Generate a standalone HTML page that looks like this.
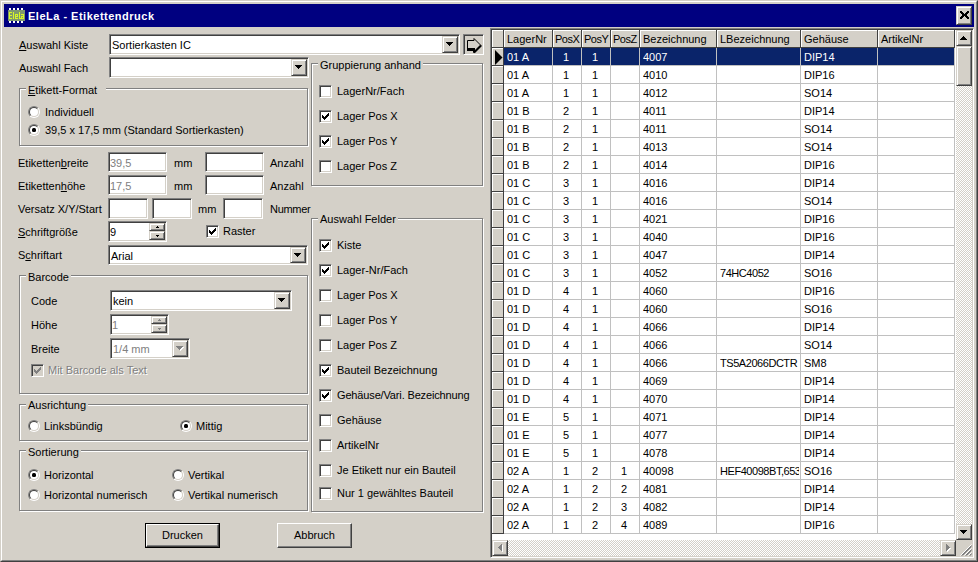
<!DOCTYPE html><html><head><meta charset="utf-8"><style>
*{margin:0;padding:0}
html,body{width:978px;height:562px;overflow:hidden;background:#d4d0c8}
body{position:relative;font-family:"Liberation Sans",sans-serif;font-size:11px}
.t{position:absolute;font-family:"Liberation Sans",sans-serif;font-size:11px;line-height:13px;white-space:nowrap;color:#000}
.gr{color:#808080}
.dis{color:#808080;text-shadow:1px 1px 0 #fff}
.sk{position:absolute;box-sizing:border-box;border:1px solid;border-color:#808080 #fff #fff #808080;box-shadow:inset 1px 1px #404040,inset -1px -1px #d4d0c8}
.rz{position:absolute;box-sizing:border-box;background:#d4d0c8;border:1px solid;border-color:#d4d0c8 #404040 #404040 #d4d0c8;box-shadow:inset 1px 1px #fff,inset -1px -1px #808080}
.ab{position:absolute;display:block}
.gb{position:absolute;box-sizing:border-box;border:1px solid #808080;box-shadow:1px 1px 0 #fff,inset 1px 1px 0 #fff}
.gt{background:#d4d0c8;padding:0 2px}
.rd{position:absolute;width:12px;height:12px;box-sizing:border-box;border-radius:50%;border:1px solid;border-color:#808080 #fff #fff #808080;transform:rotate(0deg)}
.rdi{position:absolute;left:0;top:0;width:10px;height:10px;box-sizing:border-box;border-radius:50%;border:1px solid;border-color:#404040 #d4d0c8 #d4d0c8 #404040;background:#fff}
.btn{position:absolute;box-sizing:border-box;background:#d4d0c8;border:1px solid;border-color:#fff #404040 #404040 #fff;}
.btn .bi{position:absolute;left:0;top:0;right:0;bottom:0;border-right:1px solid #808080;border-bottom:1px solid #808080}
.btn.def{border:1px solid #000}
.btn.def .bi{border:1px solid;border-color:#fff #404040 #404040 #fff;box-shadow:inset -1px -1px #808080}
.btn span{position:absolute;left:0;right:0;top:5px;text-align:center;line-height:13px;font-size:11px}
.gc{position:absolute;font-size:11px;line-height:13px;white-space:nowrap;overflow:hidden}
</style></head><body><div style="position:absolute;left:0;top:0;width:978px;height:562px;box-sizing:border-box;border:1px solid;border-color:#d4d0c8 #404040 #404040 #d4d0c8"></div>
<div style="position:absolute;left:1px;top:1px;width:976px;height:560px;box-sizing:border-box;border:1px solid;border-color:#fff #808080 #808080 #fff"></div>
<div style="position:absolute;left:4px;top:4px;width:970px;height:23px;background:#000080"></div>
<svg style="position:absolute;left:8px;top:8px" width="17" height="15">
<g fill="#fff"><rect x="1" y="0" width="2" height="2"/><rect x="5" y="0" width="2" height="2"/><rect x="9" y="0" width="2" height="2"/><rect x="13" y="0" width="2" height="2"/>
<rect x="1" y="13" width="2" height="2"/><rect x="5" y="13" width="2" height="2"/><rect x="9" y="13" width="2" height="2"/><rect x="13" y="13" width="2" height="2"/></g>
<rect x="0" y="2" width="17" height="11" fill="#7f9a6e"/>
<g fill="#d8f82a"><rect x="1" y="4" width="1" height="7"/><rect x="1" y="4" width="3" height="1"/><rect x="1" y="7" width="3" height="1"/><rect x="1" y="10" width="3" height="1"/>
<rect x="5" y="4" width="1" height="7"/>
<rect x="7" y="6" width="3" height="1"/><rect x="7" y="6" width="1" height="5"/><rect x="7" y="8" width="3" height="1"/><rect x="7" y="10" width="3" height="1"/><rect x="9" y="6" width="1" height="3"/>
<rect x="11" y="4" width="1" height="7"/><rect x="11" y="10" width="2" height="1"/>
<rect x="13" y="6" width="3" height="1"/><rect x="15" y="6" width="1" height="5"/><rect x="13" y="8" width="1" height="3"/><rect x="13" y="8" width="3" height="1"/><rect x="13" y="10" width="3" height="1"/></g>
</svg>
<div class="t" style="left:28px;top:10px;color:#fff;font-weight:bold;font-size:11px;line-height:13px;letter-spacing:0.5px">EleLa - Etikettendruck</div>
<div class="rz" style="left:956px;top:6px;width:16px;height:19px"></div>
<svg style="position:absolute;left:960px;top:11px" width="9" height="8"><path fill="#000" d="M0 0h2v1h-2zM7 0h2v1h-2zM0 1h3v1h-3zM6 1h3v1h-3zM1 2h3v1h-3zM5 2h3v1h-3zM2 3h5v1h-5zM2 4h5v1h-5zM1 5h3v1h-3zM5 5h3v1h-3zM0 6h3v1h-3zM6 6h3v1h-3zM0 7h2v1h-2zM7 7h2v1h-2z"/></svg>
<div class="t " style="left:19px;top:39px;"><u>A</u>uswahl Kiste</div>
<div class="sk" style="left:109px;top:34px;width:351px;height:21px;background:#fff;"></div>
<div class="rz" style="left:442px;top:36px;width:16px;height:17px;"></div>
<svg class="ab" style="left:446px;top:42px" width="8" height="5"><path d="M0 0h7v1h-1v1h-1v1h-1v1h-1v-1h-1v-1h-1v-1h-1z" fill="#000"/></svg>
<div class="t " style="left:112px;top:39px;">Sortierkasten IC</div>
<div style="position:absolute;left:463px;top:34px;width:21px;height:21px;box-sizing:border-box;border:1px solid;border-color:#808080 #fff #fff #808080;box-shadow:inset 1px 1px #404040"></div>
<svg style="position:absolute;left:466px;top:36px" width="18" height="19"><path d="M1.5 4.5h6.5v-2l7 7l-7 7v-2h-6.5z" fill="none" stroke="#000" stroke-width="1"/><path d="M1 12h8v3h-8zM7 12h2v4.5h-2z" fill="#000"/><path d="M15 9.5L8 16.5" stroke="#000" stroke-width="2.2"/></svg>
<div class="t " style="left:19px;top:62px;">Auswahl Fach</div>
<div class="sk" style="left:109px;top:57px;width:200px;height:21px;background:#fff;"></div>
<div class="rz" style="left:291px;top:59px;width:16px;height:17px;"></div>
<svg class="ab" style="left:295px;top:65px" width="8" height="5"><path d="M0 0h7v1h-1v1h-1v1h-1v1h-1v-1h-1v-1h-1v-1h-1z" fill="#000"/></svg>
<div class="gb" style="left:19px;top:88px;width:289px;height:58px"></div>
<div class="t gt" style="left:26px;top:84px;padding-right:9px"><u>E</u>tikett-Format</div>
<div class="rd" style="left:28px;top:106px"><div class="rdi"></div></div>
<div class="t " style="left:45px;top:106px;">Individuell</div>
<div class="rd" style="left:28px;top:124px"><div class="rdi"></div><div style="position:absolute;left:3px;top:3px;width:4px;height:4px;background:#000;border-radius:1.5px"></div></div>
<div class="t " style="left:45px;top:124px;">39,5 x 17,5 mm (Standard Sortierkasten)</div>
<div class="t " style="left:18px;top:157px;">Etiketten<u>b</u>reite</div>
<div class="sk" style="left:108px;top:152px;width:59px;height:20px;background:#fff;"></div>
<div class="t gr" style="left:110px;top:157px;">39,5</div>
<div class="t " style="left:174px;top:157px;">mm</div>
<div class="sk" style="left:205px;top:152px;width:59px;height:20px;background:#fff;"></div>
<div class="t " style="left:270px;top:157px;">Anzahl</div>
<div class="t " style="left:18px;top:180px;">Etiketten<u>h</u>öhe</div>
<div class="sk" style="left:108px;top:175px;width:59px;height:20px;background:#fff;"></div>
<div class="t gr" style="left:110px;top:180px;">17,5</div>
<div class="t " style="left:174px;top:180px;">mm</div>
<div class="sk" style="left:205px;top:175px;width:59px;height:20px;background:#fff;"></div>
<div class="t " style="left:270px;top:180px;">Anzahl</div>
<div class="t " style="left:18px;top:203px;">Versatz X/Y/Start</div>
<div class="sk" style="left:108px;top:198px;width:40px;height:21px;background:#fff;"></div>
<div class="sk" style="left:152px;top:198px;width:40px;height:21px;background:#fff;"></div>
<div class="t " style="left:198px;top:203px;">mm</div>
<div class="sk" style="left:223px;top:198px;width:40px;height:21px;background:#fff;"></div>
<div class="t " style="left:270px;top:203px;letter-spacing:-0.3px">Nummer</div>
<div class="t " style="left:18px;top:226px;"><u>S</u>chriftgröße</div>
<div class="sk" style="left:108px;top:221px;width:59px;height:21px;background:#fff;"></div>
<div class="rz" style="left:149px;top:223px;width:16px;height:8px;"></div>
<div class="rz" style="left:149px;top:231px;width:16px;height:9px;"></div>
<svg class="ab" style="left:156px;top:226px" width="3" height="2"><path d="M1 0h1v1h1v1h-3v-1h1z" fill="#000"/></svg>
<svg class="ab" style="left:156px;top:235px" width="3" height="2"><path d="M0 0h3v1h-1v1h-1v-1h-1z" fill="#000"/></svg>
<div class="t " style="left:110px;top:226px;">9</div>
<div class="sk" style="left:206px;top:225px;width:13px;height:13px;background:#fff"><svg width="7" height="7" style="position:absolute;left:2px;top:2px"><path fill="#000" d="M6 0h1v3h-1v1h-1v1h-1v1h-1v1h-1v-1h-1v-1h-1v-3h1v1h1v1h1v-1h1v-1h1v-1h1z"/></svg></div>
<div class="t " style="left:223px;top:225px;">Raster</div>
<div class="t " style="left:18px;top:249px;">S<u>c</u>hriftart</div>
<div class="sk" style="left:108px;top:245px;width:200px;height:20px;background:#fff;"></div>
<div class="rz" style="left:290px;top:247px;width:16px;height:16px;"></div>
<svg class="ab" style="left:294px;top:253px" width="8" height="5"><path d="M0 0h7v1h-1v1h-1v1h-1v1h-1v-1h-1v-1h-1v-1h-1z" fill="#000"/></svg>
<div class="t " style="left:111px;top:250px;">Arial</div>
<div class="gb" style="left:19px;top:275px;width:289px;height:119px"></div>
<div class="t gt" style="left:26px;top:271px;padding-right:2px">Barcode</div>
<div class="t " style="left:31px;top:295px;">Code</div>
<div class="sk" style="left:110px;top:290px;width:182px;height:21px;background:#fff;"></div>
<div class="rz" style="left:274px;top:292px;width:16px;height:17px;"></div>
<svg class="ab" style="left:278px;top:298px" width="8" height="5"><path d="M0 0h7v1h-1v1h-1v1h-1v1h-1v-1h-1v-1h-1v-1h-1z" fill="#000"/></svg>
<div class="t " style="left:113px;top:295px;">kein</div>
<div class="t " style="left:31px;top:319px;">Höhe</div>
<div class="sk" style="left:110px;top:314px;width:59px;height:21px;background:#fff;"></div>
<div class="rz" style="left:151px;top:316px;width:16px;height:8px;"></div>
<div class="rz" style="left:151px;top:324px;width:16px;height:9px;"></div>
<svg class="ab" style="left:158px;top:319px" width="3" height="2"><path d="M1 0h1v1h1v1h-3v-1h1z" fill="#808080"/></svg>
<svg class="ab" style="left:158px;top:328px" width="3" height="2"><path d="M0 0h3v1h-1v1h-1v-1h-1z" fill="#808080"/></svg>
<div class="t gr" style="left:112px;top:319px;">1</div>
<div class="t " style="left:31px;top:343px;">Breite</div>
<div class="sk" style="left:110px;top:338px;width:80px;height:21px;background:#fff;"></div>
<div class="rz" style="left:172px;top:340px;width:16px;height:17px;"></div>
<svg class="ab" style="left:176px;top:346px" width="8" height="5"><path d="M1 1h7v1h-1v1h-1v1h-1v1h-1v-1h-1v-1h-1v-1h-1z" fill="#fff"/><path d="M0 0h7v1h-1v1h-1v1h-1v1h-1v-1h-1v-1h-1v-1h-1z" fill="#808080"/></svg>
<div class="t gr" style="left:113px;top:343px;">1/4 mm</div>
<div class="sk" style="left:31px;top:364px;width:13px;height:13px;background:#d4d0c8"><svg width="7" height="7" style="position:absolute;left:2px;top:2px"><path fill="#808080" d="M6 0h1v3h-1v1h-1v1h-1v1h-1v1h-1v-1h-1v-1h-1v-3h1v1h1v1h1v-1h1v-1h1v-1h1z"/></svg></div>
<div class="t dis" style="left:48px;top:364px;">Mit Barcode als Text</div>
<div class="gb" style="left:19px;top:404px;width:289px;height:37px"></div>
<div class="t gt" style="left:26px;top:399px;padding-right:2px">Ausrichtung</div>
<div class="rd" style="left:28px;top:420px"><div class="rdi"></div></div>
<div class="t " style="left:44px;top:420px;">Linksbündig</div>
<div class="rd" style="left:180px;top:420px"><div class="rdi"></div><div style="position:absolute;left:3px;top:3px;width:4px;height:4px;background:#000;border-radius:1.5px"></div></div>
<div class="t " style="left:196px;top:420px;">Mittig</div>
<div class="gb" style="left:19px;top:450px;width:289px;height:61px"></div>
<div class="t gt" style="left:26px;top:446px;padding-right:2px">Sortierung</div>
<div class="rd" style="left:28px;top:469px"><div class="rdi"></div><div style="position:absolute;left:3px;top:3px;width:4px;height:4px;background:#000;border-radius:1.5px"></div></div>
<div class="t " style="left:44px;top:469px;">Horizontal</div>
<div class="rd" style="left:28px;top:489px"><div class="rdi"></div></div>
<div class="t " style="left:44px;top:489px;">Horizontal numerisch</div>
<div class="rd" style="left:172px;top:469px"><div class="rdi"></div></div>
<div class="t " style="left:188px;top:469px;">Vertikal</div>
<div class="rd" style="left:172px;top:489px"><div class="rdi"></div></div>
<div class="t " style="left:188px;top:489px;">Vertikal numerisch</div>
<div class="btn def" style="left:145px;top:523px;width:75px;height:25px"><div class="bi"></div><span>Drucken</span></div>
<div class="btn" style="left:277px;top:523px;width:75px;height:25px"><div class="bi"></div><span>Abbruch</span></div>
<div class="gb" style="left:311px;top:63px;width:172px;height:123px"></div>
<div class="t gt" style="left:318px;top:59px;padding-right:2px">Gruppierung anhand</div>
<div class="sk" style="left:319px;top:85px;width:13px;height:13px;background:#fff"></div>
<div class="t " style="left:337px;top:85px;">LagerNr/Fach</div>
<div class="sk" style="left:319px;top:110px;width:13px;height:13px;background:#fff"><svg width="7" height="7" style="position:absolute;left:2px;top:2px"><path fill="#000" d="M6 0h1v3h-1v1h-1v1h-1v1h-1v1h-1v-1h-1v-1h-1v-3h1v1h1v1h1v-1h1v-1h1v-1h1z"/></svg></div>
<div class="t " style="left:337px;top:110px;">Lager Pos X</div>
<div class="sk" style="left:319px;top:135px;width:13px;height:13px;background:#fff"><svg width="7" height="7" style="position:absolute;left:2px;top:2px"><path fill="#000" d="M6 0h1v3h-1v1h-1v1h-1v1h-1v1h-1v-1h-1v-1h-1v-3h1v1h1v1h1v-1h1v-1h1v-1h1z"/></svg></div>
<div class="t " style="left:337px;top:135px;">Lager Pos Y</div>
<div class="sk" style="left:319px;top:160px;width:13px;height:13px;background:#fff"></div>
<div class="t " style="left:337px;top:160px;">Lager Pos Z</div>
<div class="gb" style="left:311px;top:218px;width:172px;height:294px"></div>
<div class="t gt" style="left:318px;top:213px;padding-right:2px">Auswahl Felder</div>
<div class="sk" style="left:319px;top:239px;width:13px;height:13px;background:#fff"><svg width="7" height="7" style="position:absolute;left:2px;top:2px"><path fill="#000" d="M6 0h1v3h-1v1h-1v1h-1v1h-1v1h-1v-1h-1v-1h-1v-3h1v1h1v1h1v-1h1v-1h1v-1h1z"/></svg></div>
<div class="t " style="left:337px;top:239px;">Kiste</div>
<div class="sk" style="left:319px;top:264px;width:13px;height:13px;background:#fff"><svg width="7" height="7" style="position:absolute;left:2px;top:2px"><path fill="#000" d="M6 0h1v3h-1v1h-1v1h-1v1h-1v1h-1v-1h-1v-1h-1v-3h1v1h1v1h1v-1h1v-1h1v-1h1z"/></svg></div>
<div class="t " style="left:337px;top:264px;">Lager-Nr/Fach</div>
<div class="sk" style="left:319px;top:289px;width:13px;height:13px;background:#fff"></div>
<div class="t " style="left:337px;top:289px;">Lager Pos X</div>
<div class="sk" style="left:319px;top:314px;width:13px;height:13px;background:#fff"></div>
<div class="t " style="left:337px;top:314px;">Lager Pos Y</div>
<div class="sk" style="left:319px;top:339px;width:13px;height:13px;background:#fff"></div>
<div class="t " style="left:337px;top:339px;">Lager Pos Z</div>
<div class="sk" style="left:319px;top:364px;width:13px;height:13px;background:#fff"><svg width="7" height="7" style="position:absolute;left:2px;top:2px"><path fill="#000" d="M6 0h1v3h-1v1h-1v1h-1v1h-1v1h-1v-1h-1v-1h-1v-3h1v1h1v1h1v-1h1v-1h1v-1h1z"/></svg></div>
<div class="t " style="left:337px;top:364px;">Bauteil Bezeichnung</div>
<div class="sk" style="left:319px;top:389px;width:13px;height:13px;background:#fff"><svg width="7" height="7" style="position:absolute;left:2px;top:2px"><path fill="#000" d="M6 0h1v3h-1v1h-1v1h-1v1h-1v1h-1v-1h-1v-1h-1v-3h1v1h1v1h1v-1h1v-1h1v-1h1z"/></svg></div>
<div class="t " style="left:337px;top:389px;"><span style="letter-spacing:-0.15px">Gehäuse/Vari. Bezeichnung</span></div>
<div class="sk" style="left:319px;top:414px;width:13px;height:13px;background:#fff"></div>
<div class="t " style="left:337px;top:414px;">Gehäuse</div>
<div class="sk" style="left:319px;top:439px;width:13px;height:13px;background:#fff"></div>
<div class="t " style="left:337px;top:439px;">ArtikelNr</div>
<div class="sk" style="left:319px;top:464px;width:13px;height:13px;background:#fff"></div>
<div class="t " style="left:337px;top:464px;">Je Etikett nur ein Bauteil</div>
<div class="sk" style="left:319px;top:487px;width:13px;height:13px;background:#fff"></div>
<div class="t " style="left:337px;top:487px;">Nur 1 gewähltes Bauteil</div>
<div style="position:absolute;left:490px;top:28px;width:484px;height:530px;box-sizing:border-box;border:1px solid;border-color:#808080 #fff #fff #808080;background:#fff;box-shadow:inset 1px 1px #404040,inset -1px -1px #d4d0c8"></div>
<div style="position:absolute;left:492px;top:30px;width:463px;height:18px;background:#d4d0c8"></div>
<div style="position:absolute;left:492px;top:30px;width:12px;height:504px;background:#d4d0c8"></div>
<div style="position:absolute;left:504px;top:48px;width:450px;height:17px;background:#0a246a"></div>
<div style="position:absolute;left:552px;top:48px;width:1px;height:486px;background:#c0c0c0"></div>
<div style="position:absolute;left:581px;top:48px;width:1px;height:486px;background:#c0c0c0"></div>
<div style="position:absolute;left:610px;top:48px;width:1px;height:486px;background:#c0c0c0"></div>
<div style="position:absolute;left:639px;top:48px;width:1px;height:486px;background:#c0c0c0"></div>
<div style="position:absolute;left:716px;top:48px;width:1px;height:486px;background:#c0c0c0"></div>
<div style="position:absolute;left:800px;top:48px;width:1px;height:486px;background:#c0c0c0"></div>
<div style="position:absolute;left:877px;top:48px;width:1px;height:486px;background:#c0c0c0"></div>
<div style="position:absolute;left:954px;top:48px;width:1px;height:486px;background:#c0c0c0"></div>
<div style="position:absolute;left:504px;top:65px;width:451px;height:1px;background:#c0c0c0"></div>
<div style="position:absolute;left:504px;top:83px;width:451px;height:1px;background:#c0c0c0"></div>
<div style="position:absolute;left:504px;top:101px;width:451px;height:1px;background:#c0c0c0"></div>
<div style="position:absolute;left:504px;top:119px;width:451px;height:1px;background:#c0c0c0"></div>
<div style="position:absolute;left:504px;top:137px;width:451px;height:1px;background:#c0c0c0"></div>
<div style="position:absolute;left:504px;top:155px;width:451px;height:1px;background:#c0c0c0"></div>
<div style="position:absolute;left:504px;top:173px;width:451px;height:1px;background:#c0c0c0"></div>
<div style="position:absolute;left:504px;top:191px;width:451px;height:1px;background:#c0c0c0"></div>
<div style="position:absolute;left:504px;top:209px;width:451px;height:1px;background:#c0c0c0"></div>
<div style="position:absolute;left:504px;top:227px;width:451px;height:1px;background:#c0c0c0"></div>
<div style="position:absolute;left:504px;top:245px;width:451px;height:1px;background:#c0c0c0"></div>
<div style="position:absolute;left:504px;top:263px;width:451px;height:1px;background:#c0c0c0"></div>
<div style="position:absolute;left:504px;top:281px;width:451px;height:1px;background:#c0c0c0"></div>
<div style="position:absolute;left:504px;top:299px;width:451px;height:1px;background:#c0c0c0"></div>
<div style="position:absolute;left:504px;top:317px;width:451px;height:1px;background:#c0c0c0"></div>
<div style="position:absolute;left:504px;top:335px;width:451px;height:1px;background:#c0c0c0"></div>
<div style="position:absolute;left:504px;top:353px;width:451px;height:1px;background:#c0c0c0"></div>
<div style="position:absolute;left:504px;top:371px;width:451px;height:1px;background:#c0c0c0"></div>
<div style="position:absolute;left:504px;top:389px;width:451px;height:1px;background:#c0c0c0"></div>
<div style="position:absolute;left:504px;top:407px;width:451px;height:1px;background:#c0c0c0"></div>
<div style="position:absolute;left:504px;top:425px;width:451px;height:1px;background:#c0c0c0"></div>
<div style="position:absolute;left:504px;top:443px;width:451px;height:1px;background:#c0c0c0"></div>
<div style="position:absolute;left:504px;top:461px;width:451px;height:1px;background:#c0c0c0"></div>
<div style="position:absolute;left:504px;top:479px;width:451px;height:1px;background:#c0c0c0"></div>
<div style="position:absolute;left:504px;top:497px;width:451px;height:1px;background:#c0c0c0"></div>
<div style="position:absolute;left:504px;top:515px;width:451px;height:1px;background:#c0c0c0"></div>
<div style="position:absolute;left:504px;top:533px;width:451px;height:1px;background:#c0c0c0"></div>
<div style="position:absolute;left:504px;top:30px;width:48px;height:17px;box-sizing:border-box;border-top:1px solid #fff;border-left:1px solid #fff;"></div>
<div style="position:absolute;left:552px;top:30px;width:1px;height:18px;background:#404040"></div>
<div class="t " style="left:507px;top:33px;">LagerNr</div>
<div style="position:absolute;left:553px;top:30px;width:28px;height:17px;box-sizing:border-box;border-top:1px solid #fff;border-left:1px solid #fff;"></div>
<div style="position:absolute;left:581px;top:30px;width:1px;height:18px;background:#404040"></div>
<div class="t " style="left:555px;top:33px;letter-spacing:-0.5px">PosX</div>
<div style="position:absolute;left:582px;top:30px;width:28px;height:17px;box-sizing:border-box;border-top:1px solid #fff;border-left:1px solid #fff;"></div>
<div style="position:absolute;left:610px;top:30px;width:1px;height:18px;background:#404040"></div>
<div class="t " style="left:584px;top:33px;letter-spacing:-0.5px">PosY</div>
<div style="position:absolute;left:611px;top:30px;width:28px;height:17px;box-sizing:border-box;border-top:1px solid #fff;border-left:1px solid #fff;"></div>
<div style="position:absolute;left:639px;top:30px;width:1px;height:18px;background:#404040"></div>
<div class="t " style="left:613px;top:33px;letter-spacing:-0.5px">PosZ</div>
<div style="position:absolute;left:640px;top:30px;width:76px;height:17px;box-sizing:border-box;border-top:1px solid #fff;border-left:1px solid #fff;"></div>
<div style="position:absolute;left:716px;top:30px;width:1px;height:18px;background:#404040"></div>
<div class="t " style="left:643px;top:33px;">Bezeichnung</div>
<div style="position:absolute;left:717px;top:30px;width:83px;height:17px;box-sizing:border-box;border-top:1px solid #fff;border-left:1px solid #fff;"></div>
<div style="position:absolute;left:800px;top:30px;width:1px;height:18px;background:#404040"></div>
<div class="t " style="left:720px;top:33px;">LBezeichnung</div>
<div style="position:absolute;left:801px;top:30px;width:76px;height:17px;box-sizing:border-box;border-top:1px solid #fff;border-left:1px solid #fff;"></div>
<div style="position:absolute;left:877px;top:30px;width:1px;height:18px;background:#404040"></div>
<div class="t " style="left:804px;top:33px;">Gehäuse</div>
<div style="position:absolute;left:878px;top:30px;width:76px;height:17px;box-sizing:border-box;border-top:1px solid #fff;border-left:1px solid #fff;"></div>
<div style="position:absolute;left:954px;top:30px;width:1px;height:18px;background:#404040"></div>
<div class="t " style="left:881px;top:33px;">ArtikelNr</div>
<div style="position:absolute;left:492px;top:47px;width:463px;height:1px;background:#404040"></div>
<div style="position:absolute;left:492px;top:30px;width:11px;height:17px;box-sizing:border-box;border-top:1px solid #fff;border-left:1px solid #fff"></div>
<div style="position:absolute;left:492px;top:47px;width:12px;height:1px;background:#404040"></div>
<div style="position:absolute;left:492px;top:48px;width:11px;height:17px;box-sizing:border-box;border-top:1px solid #fff;border-left:1px solid #fff"></div>
<div style="position:absolute;left:492px;top:65px;width:12px;height:1px;background:#404040"></div>
<div style="position:absolute;left:492px;top:66px;width:11px;height:17px;box-sizing:border-box;border-top:1px solid #fff;border-left:1px solid #fff"></div>
<div style="position:absolute;left:492px;top:83px;width:12px;height:1px;background:#404040"></div>
<div style="position:absolute;left:492px;top:84px;width:11px;height:17px;box-sizing:border-box;border-top:1px solid #fff;border-left:1px solid #fff"></div>
<div style="position:absolute;left:492px;top:101px;width:12px;height:1px;background:#404040"></div>
<div style="position:absolute;left:492px;top:102px;width:11px;height:17px;box-sizing:border-box;border-top:1px solid #fff;border-left:1px solid #fff"></div>
<div style="position:absolute;left:492px;top:119px;width:12px;height:1px;background:#404040"></div>
<div style="position:absolute;left:492px;top:120px;width:11px;height:17px;box-sizing:border-box;border-top:1px solid #fff;border-left:1px solid #fff"></div>
<div style="position:absolute;left:492px;top:137px;width:12px;height:1px;background:#404040"></div>
<div style="position:absolute;left:492px;top:138px;width:11px;height:17px;box-sizing:border-box;border-top:1px solid #fff;border-left:1px solid #fff"></div>
<div style="position:absolute;left:492px;top:155px;width:12px;height:1px;background:#404040"></div>
<div style="position:absolute;left:492px;top:156px;width:11px;height:17px;box-sizing:border-box;border-top:1px solid #fff;border-left:1px solid #fff"></div>
<div style="position:absolute;left:492px;top:173px;width:12px;height:1px;background:#404040"></div>
<div style="position:absolute;left:492px;top:174px;width:11px;height:17px;box-sizing:border-box;border-top:1px solid #fff;border-left:1px solid #fff"></div>
<div style="position:absolute;left:492px;top:191px;width:12px;height:1px;background:#404040"></div>
<div style="position:absolute;left:492px;top:192px;width:11px;height:17px;box-sizing:border-box;border-top:1px solid #fff;border-left:1px solid #fff"></div>
<div style="position:absolute;left:492px;top:209px;width:12px;height:1px;background:#404040"></div>
<div style="position:absolute;left:492px;top:210px;width:11px;height:17px;box-sizing:border-box;border-top:1px solid #fff;border-left:1px solid #fff"></div>
<div style="position:absolute;left:492px;top:227px;width:12px;height:1px;background:#404040"></div>
<div style="position:absolute;left:492px;top:228px;width:11px;height:17px;box-sizing:border-box;border-top:1px solid #fff;border-left:1px solid #fff"></div>
<div style="position:absolute;left:492px;top:245px;width:12px;height:1px;background:#404040"></div>
<div style="position:absolute;left:492px;top:246px;width:11px;height:17px;box-sizing:border-box;border-top:1px solid #fff;border-left:1px solid #fff"></div>
<div style="position:absolute;left:492px;top:263px;width:12px;height:1px;background:#404040"></div>
<div style="position:absolute;left:492px;top:264px;width:11px;height:17px;box-sizing:border-box;border-top:1px solid #fff;border-left:1px solid #fff"></div>
<div style="position:absolute;left:492px;top:281px;width:12px;height:1px;background:#404040"></div>
<div style="position:absolute;left:492px;top:282px;width:11px;height:17px;box-sizing:border-box;border-top:1px solid #fff;border-left:1px solid #fff"></div>
<div style="position:absolute;left:492px;top:299px;width:12px;height:1px;background:#404040"></div>
<div style="position:absolute;left:492px;top:300px;width:11px;height:17px;box-sizing:border-box;border-top:1px solid #fff;border-left:1px solid #fff"></div>
<div style="position:absolute;left:492px;top:317px;width:12px;height:1px;background:#404040"></div>
<div style="position:absolute;left:492px;top:318px;width:11px;height:17px;box-sizing:border-box;border-top:1px solid #fff;border-left:1px solid #fff"></div>
<div style="position:absolute;left:492px;top:335px;width:12px;height:1px;background:#404040"></div>
<div style="position:absolute;left:492px;top:336px;width:11px;height:17px;box-sizing:border-box;border-top:1px solid #fff;border-left:1px solid #fff"></div>
<div style="position:absolute;left:492px;top:353px;width:12px;height:1px;background:#404040"></div>
<div style="position:absolute;left:492px;top:354px;width:11px;height:17px;box-sizing:border-box;border-top:1px solid #fff;border-left:1px solid #fff"></div>
<div style="position:absolute;left:492px;top:371px;width:12px;height:1px;background:#404040"></div>
<div style="position:absolute;left:492px;top:372px;width:11px;height:17px;box-sizing:border-box;border-top:1px solid #fff;border-left:1px solid #fff"></div>
<div style="position:absolute;left:492px;top:389px;width:12px;height:1px;background:#404040"></div>
<div style="position:absolute;left:492px;top:390px;width:11px;height:17px;box-sizing:border-box;border-top:1px solid #fff;border-left:1px solid #fff"></div>
<div style="position:absolute;left:492px;top:407px;width:12px;height:1px;background:#404040"></div>
<div style="position:absolute;left:492px;top:408px;width:11px;height:17px;box-sizing:border-box;border-top:1px solid #fff;border-left:1px solid #fff"></div>
<div style="position:absolute;left:492px;top:425px;width:12px;height:1px;background:#404040"></div>
<div style="position:absolute;left:492px;top:426px;width:11px;height:17px;box-sizing:border-box;border-top:1px solid #fff;border-left:1px solid #fff"></div>
<div style="position:absolute;left:492px;top:443px;width:12px;height:1px;background:#404040"></div>
<div style="position:absolute;left:492px;top:444px;width:11px;height:17px;box-sizing:border-box;border-top:1px solid #fff;border-left:1px solid #fff"></div>
<div style="position:absolute;left:492px;top:461px;width:12px;height:1px;background:#404040"></div>
<div style="position:absolute;left:492px;top:462px;width:11px;height:17px;box-sizing:border-box;border-top:1px solid #fff;border-left:1px solid #fff"></div>
<div style="position:absolute;left:492px;top:479px;width:12px;height:1px;background:#404040"></div>
<div style="position:absolute;left:492px;top:480px;width:11px;height:17px;box-sizing:border-box;border-top:1px solid #fff;border-left:1px solid #fff"></div>
<div style="position:absolute;left:492px;top:497px;width:12px;height:1px;background:#404040"></div>
<div style="position:absolute;left:492px;top:498px;width:11px;height:17px;box-sizing:border-box;border-top:1px solid #fff;border-left:1px solid #fff"></div>
<div style="position:absolute;left:492px;top:515px;width:12px;height:1px;background:#404040"></div>
<div style="position:absolute;left:492px;top:516px;width:11px;height:17px;box-sizing:border-box;border-top:1px solid #fff;border-left:1px solid #fff"></div>
<div style="position:absolute;left:492px;top:533px;width:12px;height:1px;background:#404040"></div>
<div style="position:absolute;left:503px;top:30px;width:1px;height:504px;background:#404040"></div>
<svg style="position:absolute;left:495px;top:50px" width="8" height="15"><path d="M0 0L7.5 7.5L0 15z" fill="#000"/></svg>
<div class="gc" style="left:507px;top:51px;width:44px;color:#fff;">01 A</div>
<div class="gc" style="left:552px;top:51px;width:28px;text-align:center;color:#fff">1</div>
<div class="gc" style="left:581px;top:51px;width:28px;text-align:center;color:#fff">1</div>
<div class="gc" style="left:643px;top:51px;width:72px;color:#fff;">4007</div>
<div class="gc" style="left:804px;top:51px;width:72px;color:#fff;">DIP14</div>
<div class="gc" style="left:507px;top:69px;width:44px;color:#000;">01 A</div>
<div class="gc" style="left:552px;top:69px;width:28px;text-align:center;color:#000">1</div>
<div class="gc" style="left:581px;top:69px;width:28px;text-align:center;color:#000">1</div>
<div class="gc" style="left:643px;top:69px;width:72px;color:#000;">4010</div>
<div class="gc" style="left:804px;top:69px;width:72px;color:#000;">DIP16</div>
<div class="gc" style="left:507px;top:87px;width:44px;color:#000;">01 A</div>
<div class="gc" style="left:552px;top:87px;width:28px;text-align:center;color:#000">1</div>
<div class="gc" style="left:581px;top:87px;width:28px;text-align:center;color:#000">1</div>
<div class="gc" style="left:643px;top:87px;width:72px;color:#000;">4012</div>
<div class="gc" style="left:804px;top:87px;width:72px;color:#000;">SO14</div>
<div class="gc" style="left:507px;top:105px;width:44px;color:#000;">01 B</div>
<div class="gc" style="left:552px;top:105px;width:28px;text-align:center;color:#000">2</div>
<div class="gc" style="left:581px;top:105px;width:28px;text-align:center;color:#000">1</div>
<div class="gc" style="left:643px;top:105px;width:72px;color:#000;">4011</div>
<div class="gc" style="left:804px;top:105px;width:72px;color:#000;">DIP14</div>
<div class="gc" style="left:507px;top:123px;width:44px;color:#000;">01 B</div>
<div class="gc" style="left:552px;top:123px;width:28px;text-align:center;color:#000">2</div>
<div class="gc" style="left:581px;top:123px;width:28px;text-align:center;color:#000">1</div>
<div class="gc" style="left:643px;top:123px;width:72px;color:#000;">4011</div>
<div class="gc" style="left:804px;top:123px;width:72px;color:#000;">SO14</div>
<div class="gc" style="left:507px;top:141px;width:44px;color:#000;">01 B</div>
<div class="gc" style="left:552px;top:141px;width:28px;text-align:center;color:#000">2</div>
<div class="gc" style="left:581px;top:141px;width:28px;text-align:center;color:#000">1</div>
<div class="gc" style="left:643px;top:141px;width:72px;color:#000;">4013</div>
<div class="gc" style="left:804px;top:141px;width:72px;color:#000;">SO14</div>
<div class="gc" style="left:507px;top:159px;width:44px;color:#000;">01 B</div>
<div class="gc" style="left:552px;top:159px;width:28px;text-align:center;color:#000">2</div>
<div class="gc" style="left:581px;top:159px;width:28px;text-align:center;color:#000">1</div>
<div class="gc" style="left:643px;top:159px;width:72px;color:#000;">4014</div>
<div class="gc" style="left:804px;top:159px;width:72px;color:#000;">DIP16</div>
<div class="gc" style="left:507px;top:177px;width:44px;color:#000;">01 C</div>
<div class="gc" style="left:552px;top:177px;width:28px;text-align:center;color:#000">3</div>
<div class="gc" style="left:581px;top:177px;width:28px;text-align:center;color:#000">1</div>
<div class="gc" style="left:643px;top:177px;width:72px;color:#000;">4016</div>
<div class="gc" style="left:804px;top:177px;width:72px;color:#000;">DIP14</div>
<div class="gc" style="left:507px;top:195px;width:44px;color:#000;">01 C</div>
<div class="gc" style="left:552px;top:195px;width:28px;text-align:center;color:#000">3</div>
<div class="gc" style="left:581px;top:195px;width:28px;text-align:center;color:#000">1</div>
<div class="gc" style="left:643px;top:195px;width:72px;color:#000;">4016</div>
<div class="gc" style="left:804px;top:195px;width:72px;color:#000;">SO14</div>
<div class="gc" style="left:507px;top:213px;width:44px;color:#000;">01 C</div>
<div class="gc" style="left:552px;top:213px;width:28px;text-align:center;color:#000">3</div>
<div class="gc" style="left:581px;top:213px;width:28px;text-align:center;color:#000">1</div>
<div class="gc" style="left:643px;top:213px;width:72px;color:#000;">4021</div>
<div class="gc" style="left:804px;top:213px;width:72px;color:#000;">DIP16</div>
<div class="gc" style="left:507px;top:231px;width:44px;color:#000;">01 C</div>
<div class="gc" style="left:552px;top:231px;width:28px;text-align:center;color:#000">3</div>
<div class="gc" style="left:581px;top:231px;width:28px;text-align:center;color:#000">1</div>
<div class="gc" style="left:643px;top:231px;width:72px;color:#000;">4040</div>
<div class="gc" style="left:804px;top:231px;width:72px;color:#000;">DIP16</div>
<div class="gc" style="left:507px;top:249px;width:44px;color:#000;">01 C</div>
<div class="gc" style="left:552px;top:249px;width:28px;text-align:center;color:#000">3</div>
<div class="gc" style="left:581px;top:249px;width:28px;text-align:center;color:#000">1</div>
<div class="gc" style="left:643px;top:249px;width:72px;color:#000;">4047</div>
<div class="gc" style="left:804px;top:249px;width:72px;color:#000;">DIP14</div>
<div class="gc" style="left:507px;top:267px;width:44px;color:#000;">01 C</div>
<div class="gc" style="left:552px;top:267px;width:28px;text-align:center;color:#000">3</div>
<div class="gc" style="left:581px;top:267px;width:28px;text-align:center;color:#000">1</div>
<div class="gc" style="left:643px;top:267px;width:72px;color:#000;">4052</div>
<div class="gc" style="left:720px;top:267px;width:79px;color:#000;letter-spacing:-0.45px;">74HC4052</div>
<div class="gc" style="left:804px;top:267px;width:72px;color:#000;">SO16</div>
<div class="gc" style="left:507px;top:285px;width:44px;color:#000;">01 D</div>
<div class="gc" style="left:552px;top:285px;width:28px;text-align:center;color:#000">4</div>
<div class="gc" style="left:581px;top:285px;width:28px;text-align:center;color:#000">1</div>
<div class="gc" style="left:643px;top:285px;width:72px;color:#000;">4060</div>
<div class="gc" style="left:804px;top:285px;width:72px;color:#000;">DIP16</div>
<div class="gc" style="left:507px;top:303px;width:44px;color:#000;">01 D</div>
<div class="gc" style="left:552px;top:303px;width:28px;text-align:center;color:#000">4</div>
<div class="gc" style="left:581px;top:303px;width:28px;text-align:center;color:#000">1</div>
<div class="gc" style="left:643px;top:303px;width:72px;color:#000;">4060</div>
<div class="gc" style="left:804px;top:303px;width:72px;color:#000;">SO16</div>
<div class="gc" style="left:507px;top:321px;width:44px;color:#000;">01 D</div>
<div class="gc" style="left:552px;top:321px;width:28px;text-align:center;color:#000">4</div>
<div class="gc" style="left:581px;top:321px;width:28px;text-align:center;color:#000">1</div>
<div class="gc" style="left:643px;top:321px;width:72px;color:#000;">4066</div>
<div class="gc" style="left:804px;top:321px;width:72px;color:#000;">DIP14</div>
<div class="gc" style="left:507px;top:339px;width:44px;color:#000;">01 D</div>
<div class="gc" style="left:552px;top:339px;width:28px;text-align:center;color:#000">4</div>
<div class="gc" style="left:581px;top:339px;width:28px;text-align:center;color:#000">1</div>
<div class="gc" style="left:643px;top:339px;width:72px;color:#000;">4066</div>
<div class="gc" style="left:804px;top:339px;width:72px;color:#000;">SO14</div>
<div class="gc" style="left:507px;top:357px;width:44px;color:#000;">01 D</div>
<div class="gc" style="left:552px;top:357px;width:28px;text-align:center;color:#000">4</div>
<div class="gc" style="left:581px;top:357px;width:28px;text-align:center;color:#000">1</div>
<div class="gc" style="left:643px;top:357px;width:72px;color:#000;">4066</div>
<div class="gc" style="left:720px;top:357px;width:79px;color:#000;letter-spacing:-0.45px;">TS5A2066DCTR</div>
<div class="gc" style="left:804px;top:357px;width:72px;color:#000;">SM8</div>
<div class="gc" style="left:507px;top:375px;width:44px;color:#000;">01 D</div>
<div class="gc" style="left:552px;top:375px;width:28px;text-align:center;color:#000">4</div>
<div class="gc" style="left:581px;top:375px;width:28px;text-align:center;color:#000">1</div>
<div class="gc" style="left:643px;top:375px;width:72px;color:#000;">4069</div>
<div class="gc" style="left:804px;top:375px;width:72px;color:#000;">DIP14</div>
<div class="gc" style="left:507px;top:393px;width:44px;color:#000;">01 D</div>
<div class="gc" style="left:552px;top:393px;width:28px;text-align:center;color:#000">4</div>
<div class="gc" style="left:581px;top:393px;width:28px;text-align:center;color:#000">1</div>
<div class="gc" style="left:643px;top:393px;width:72px;color:#000;">4070</div>
<div class="gc" style="left:804px;top:393px;width:72px;color:#000;">DIP14</div>
<div class="gc" style="left:507px;top:411px;width:44px;color:#000;">01 E</div>
<div class="gc" style="left:552px;top:411px;width:28px;text-align:center;color:#000">5</div>
<div class="gc" style="left:581px;top:411px;width:28px;text-align:center;color:#000">1</div>
<div class="gc" style="left:643px;top:411px;width:72px;color:#000;">4071</div>
<div class="gc" style="left:804px;top:411px;width:72px;color:#000;">DIP14</div>
<div class="gc" style="left:507px;top:429px;width:44px;color:#000;">01 E</div>
<div class="gc" style="left:552px;top:429px;width:28px;text-align:center;color:#000">5</div>
<div class="gc" style="left:581px;top:429px;width:28px;text-align:center;color:#000">1</div>
<div class="gc" style="left:643px;top:429px;width:72px;color:#000;">4077</div>
<div class="gc" style="left:804px;top:429px;width:72px;color:#000;">DIP14</div>
<div class="gc" style="left:507px;top:447px;width:44px;color:#000;">01 E</div>
<div class="gc" style="left:552px;top:447px;width:28px;text-align:center;color:#000">5</div>
<div class="gc" style="left:581px;top:447px;width:28px;text-align:center;color:#000">1</div>
<div class="gc" style="left:643px;top:447px;width:72px;color:#000;">4078</div>
<div class="gc" style="left:804px;top:447px;width:72px;color:#000;">DIP14</div>
<div class="gc" style="left:507px;top:465px;width:44px;color:#000;">02 A</div>
<div class="gc" style="left:552px;top:465px;width:28px;text-align:center;color:#000">1</div>
<div class="gc" style="left:581px;top:465px;width:28px;text-align:center;color:#000">2</div>
<div class="gc" style="left:610px;top:465px;width:28px;text-align:center;color:#000">1</div>
<div class="gc" style="left:643px;top:465px;width:72px;color:#000;">40098</div>
<div class="gc" style="left:720px;top:465px;width:79px;color:#000;letter-spacing:-0.45px;">HEF40098BT,653</div>
<div class="gc" style="left:804px;top:465px;width:72px;color:#000;">SO16</div>
<div class="gc" style="left:507px;top:483px;width:44px;color:#000;">02 A</div>
<div class="gc" style="left:552px;top:483px;width:28px;text-align:center;color:#000">1</div>
<div class="gc" style="left:581px;top:483px;width:28px;text-align:center;color:#000">2</div>
<div class="gc" style="left:610px;top:483px;width:28px;text-align:center;color:#000">2</div>
<div class="gc" style="left:643px;top:483px;width:72px;color:#000;">4081</div>
<div class="gc" style="left:804px;top:483px;width:72px;color:#000;">DIP14</div>
<div class="gc" style="left:507px;top:501px;width:44px;color:#000;">02 A</div>
<div class="gc" style="left:552px;top:501px;width:28px;text-align:center;color:#000">1</div>
<div class="gc" style="left:581px;top:501px;width:28px;text-align:center;color:#000">2</div>
<div class="gc" style="left:610px;top:501px;width:28px;text-align:center;color:#000">3</div>
<div class="gc" style="left:643px;top:501px;width:72px;color:#000;">4082</div>
<div class="gc" style="left:804px;top:501px;width:72px;color:#000;">DIP14</div>
<div class="gc" style="left:507px;top:519px;width:44px;color:#000;">02 A</div>
<div class="gc" style="left:552px;top:519px;width:28px;text-align:center;color:#000">1</div>
<div class="gc" style="left:581px;top:519px;width:28px;text-align:center;color:#000">2</div>
<div class="gc" style="left:610px;top:519px;width:28px;text-align:center;color:#000">4</div>
<div class="gc" style="left:643px;top:519px;width:72px;color:#000;">4089</div>
<div class="gc" style="left:804px;top:519px;width:72px;color:#000;">DIP16</div>
<div style="position:absolute;left:956px;top:30px;width:16px;height:510px;background-color:#fff;background-image:linear-gradient(45deg,#d4d0c8 25%,transparent 25%,transparent 75%,#d4d0c8 75%),linear-gradient(45deg,#d4d0c8 25%,transparent 25%,transparent 75%,#d4d0c8 75%);background-size:2px 2px;background-position:0 0,1px 1px"></div>
<div class="rz" style="left:956px;top:30px;width:16px;height:16px;"></div>
<svg class="ab" style="left:960px;top:36px" width="7" height="4"><path d="M3 0h1v1h1v1h1v1h1v1h-7v-1h1v-1h1v-1h1z" fill="#000"/></svg>
<div class="rz" style="left:956px;top:46px;width:16px;height:40px;"></div>
<div class="rz" style="left:956px;top:524px;width:16px;height:16px;"></div>
<svg class="ab" style="left:960px;top:530px" width="8" height="5"><path d="M0 0h7v1h-1v1h-1v1h-1v1h-1v-1h-1v-1h-1v-1h-1z" fill="#000"/></svg>
<div style="position:absolute;left:492px;top:540px;width:464px;height:16px;background-color:#fff;background-image:linear-gradient(45deg,#d4d0c8 25%,transparent 25%,transparent 75%,#d4d0c8 75%),linear-gradient(45deg,#d4d0c8 25%,transparent 25%,transparent 75%,#d4d0c8 75%);background-size:2px 2px;background-position:0 0,1px 1px"></div>
<div class="rz" style="left:492px;top:540px;width:16px;height:16px;"></div>
<svg class="ab" style="left:498px;top:544px" width="5" height="8"><path d="M4 1h1v7h-1v-1h-1v-1h-1v-1h-1v-1h1v-1h1v-1h1z" fill="#fff"/><path d="M3 0h1v7h-1v-1h-1v-1h-1v-1h-1v-1h1v-1h1v-1h1z" fill="#808080"/></svg>
<div class="rz" style="left:940px;top:540px;width:16px;height:16px;"></div>
<svg class="ab" style="left:946px;top:544px" width="5" height="8"><path d="M1 1h1v1h1v1h1v1h1v1h-1v1h-1v1h-1v1h-1z" fill="#fff"/><path d="M0 0h1v1h1v1h1v1h1v1h-1v1h-1v1h-1v1h-1z" fill="#808080"/></svg>
<div style="position:absolute;left:956px;top:540px;width:16px;height:16px;background:#d4d0c8"></div>
<svg style="position:absolute;left:956px;top:540px" width="16" height="16"><g stroke-width="1"><path d="M15.5 5.5L5.5 15.5M15.5 9.5L9.5 15.5M15.5 13.5L13.5 15.5" stroke="#808080"/><path d="M15.5 6.5L6.5 15.5M15.5 10.5L10.5 15.5M15.5 14.5L14.5 15.5" stroke="#808080"/><path d="M15.5 4.5L4.5 15.5M15.5 8.5L8.5 15.5M15.5 12.5L12.5 15.5" stroke="#fff"/></g></svg></body></html>
